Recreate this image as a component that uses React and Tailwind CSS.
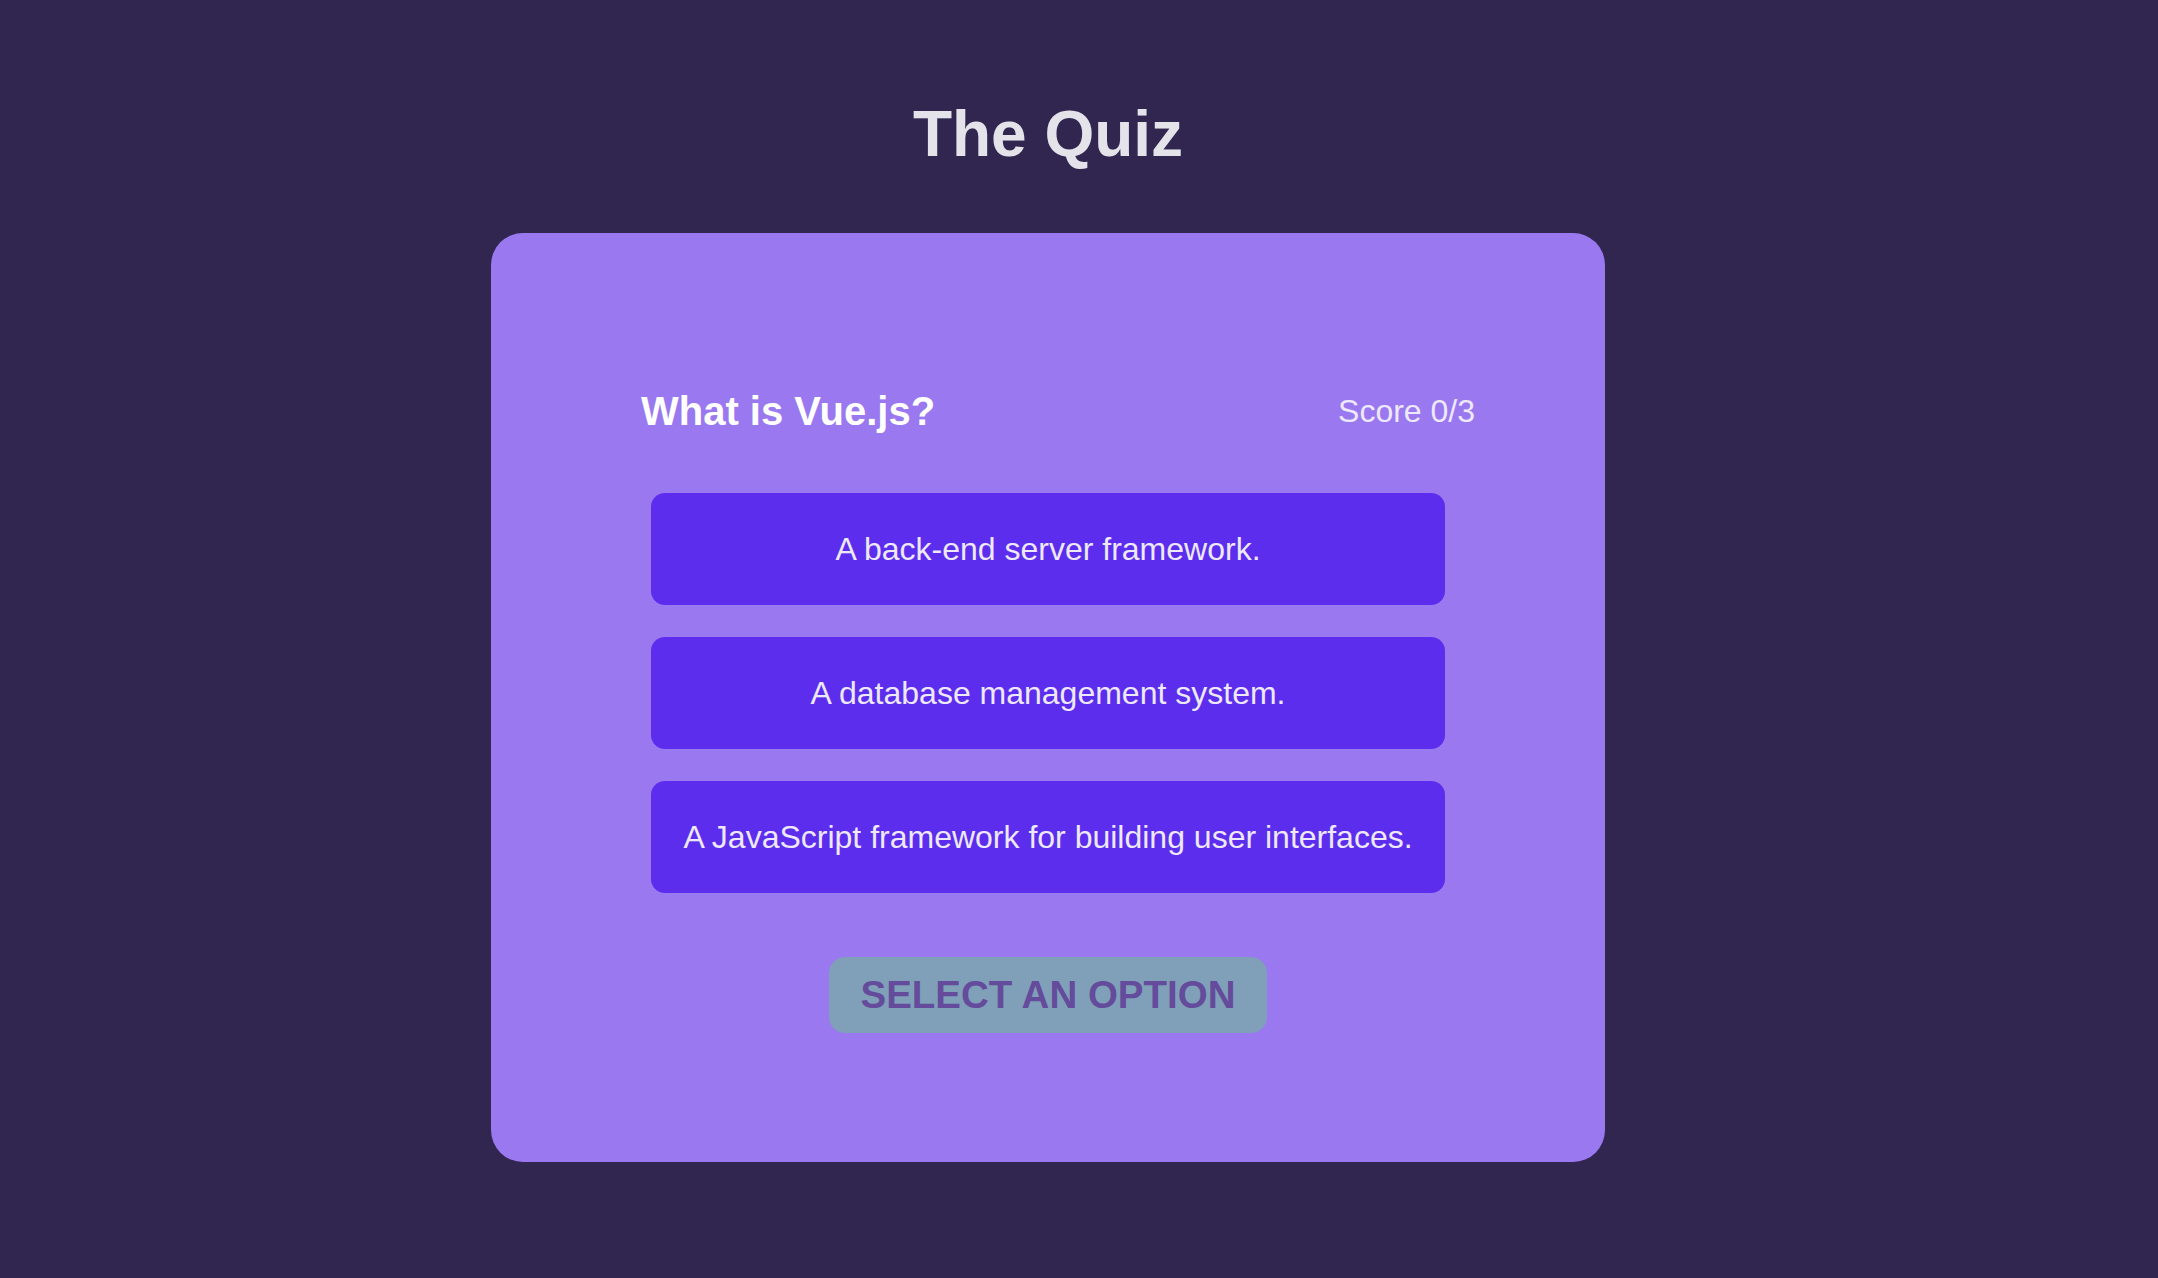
const options = [
  'A back-end server framework.',
  'A database management system.',
  'A JavaScript framework for building user interfaces.',
];

export default function App() {
  return (
    <div className="min-h-screen w-full bg-[#312650] font-['Liberation_Sans',Arial,sans-serif]">
      <div className="flex w-[2096px] flex-col items-center pt-[102px] pb-[116px]">
        <h1 className="text-[64px] leading-none font-bold text-[#e5e3ea]">The Quiz</h1>

        <div className="mt-[67px] flex h-[929px] w-[1114px] flex-col rounded-[32px] bg-[#9a78ef] pt-[158px]">
          <div className="flex items-center justify-between pl-[150px] pr-[130px]">
            <h2 className="text-[40px] leading-none font-bold text-white">What is Vue.js?</h2>
            <span className="text-[32px] leading-none text-[#eee8fb]">Score 0/3</span>
          </div>

          <div className="mt-[62px] flex flex-col items-center gap-[32px]">
            {options.map((option) => (
              <button
                key={option}
                className="flex h-[112px] w-[794px] items-center justify-center rounded-[14px] bg-[#5c2ded] text-[32px] leading-none text-[#eee8fb]"
              >
                {option}
              </button>
            ))}
          </div>

          <div className="mt-[64px] flex justify-center">
            <button className="flex h-[76px] w-[438px] items-center justify-center rounded-[16px] bg-[#7fa0b8] text-[38.5px] leading-none font-bold uppercase text-[#654b9b]">
              Select an option
            </button>
          </div>
        </div>
      </div>
    </div>
  );
}
